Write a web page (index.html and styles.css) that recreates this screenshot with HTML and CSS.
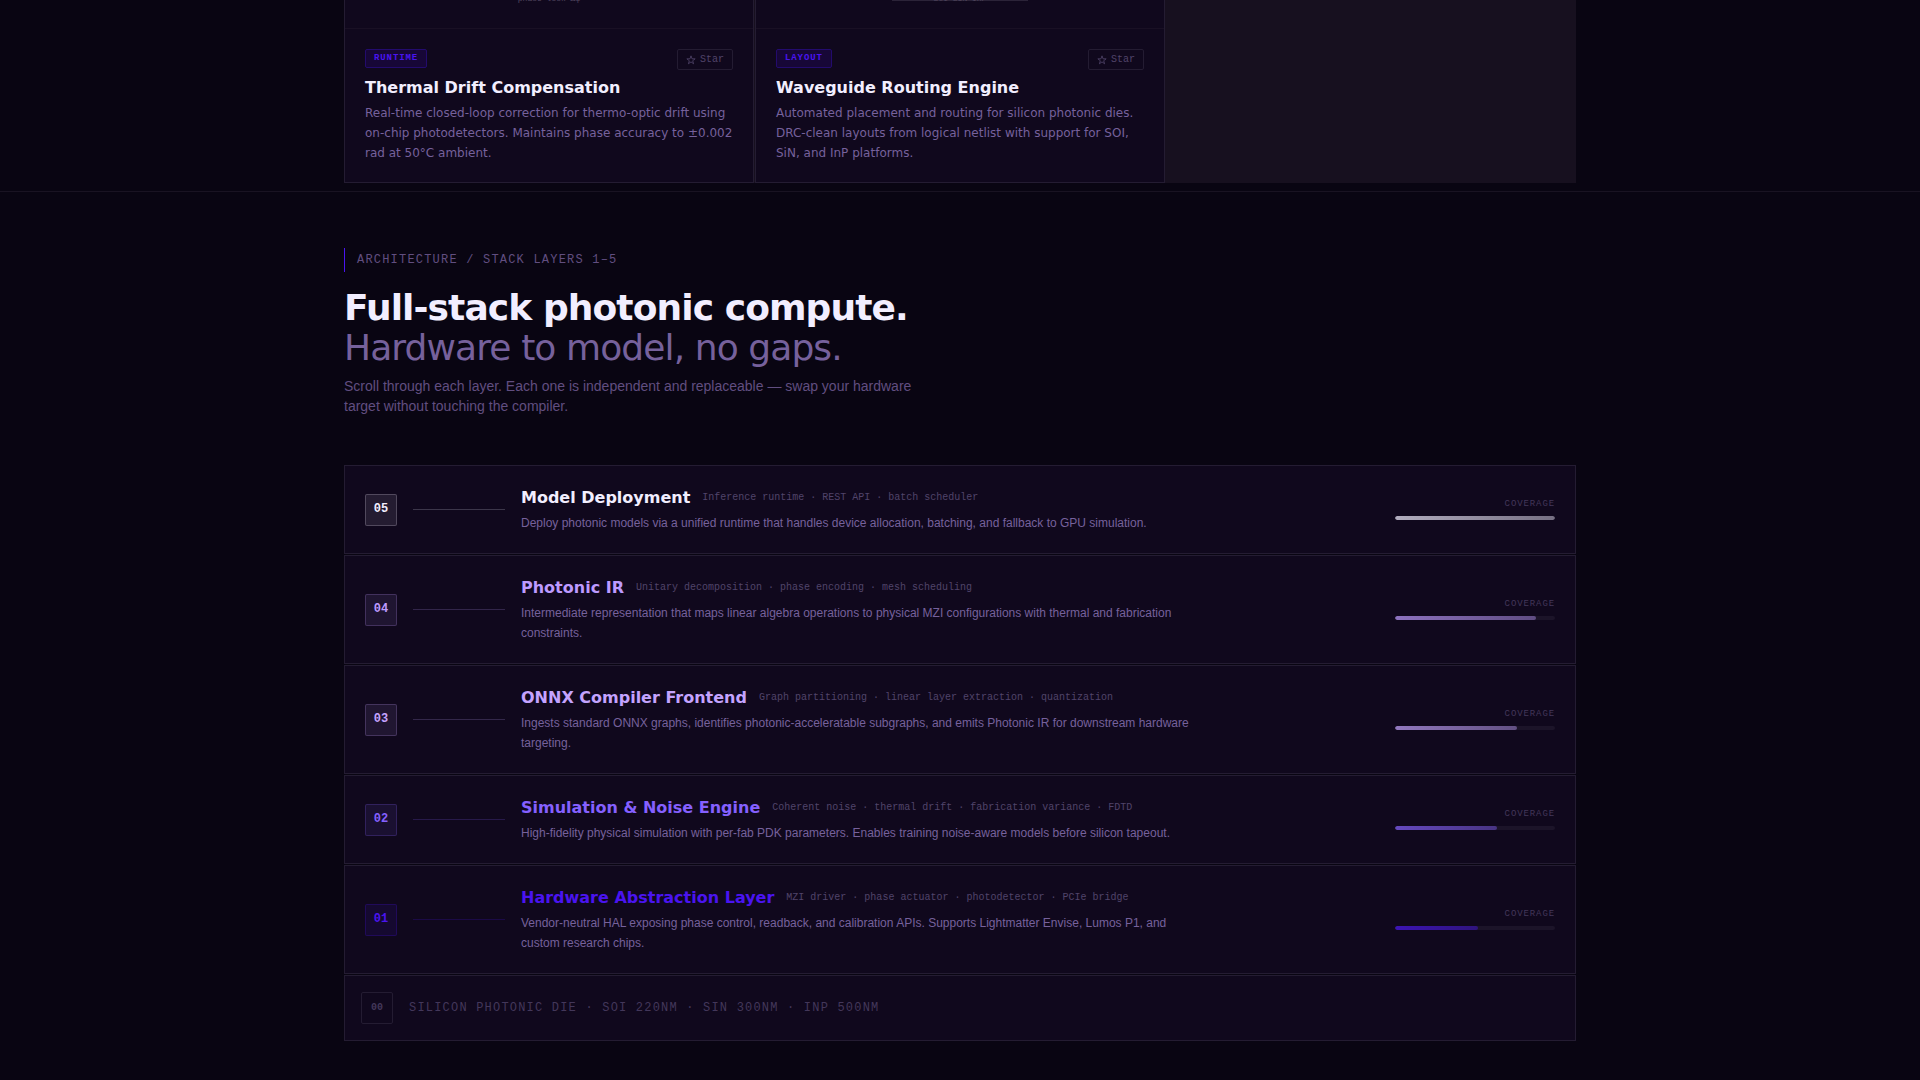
FILE: index.html
```
<!DOCTYPE html>
<html lang="en">
<head>
<meta charset="utf-8">
<title>Photonic compute stack</title>
<link rel="stylesheet" href="styles.css">
</head>
<body>
<section class="projects">
  <div class="container">
    <div class="card-grid">
      <article class="card">
        <div class="card-visual"><svg class="plot" viewBox="0 0 408 28"><text x="204" y="1" text-anchor="middle">phase lock Δφ</text></svg></div>
        <div class="card-body">
          <div class="card-top"><span class="tag">RUNTIME</span>
            <button class="star" type="button"><svg viewBox="0 0 24 24"><path d="M12 2L14.500 9.200H22L16 13.800L18.200 21L12 16.600L5.800 21L8 13.800L2 9.200H9.500Z"/></svg>Star</button></div>
          <h3>Thermal Drift Compensation</h3>
          <p>Real-time closed-loop correction for thermo-optic drift using on-chip photodetectors. Maintains phase accuracy to ±0.002 rad at 50°C ambient.</p>
        </div>
      </article>
      <article class="card">
        <div class="card-visual"><svg class="plot" viewBox="0 0 408 28"><path d="M136 0.500H272"/><text x="204" y="1" text-anchor="middle">SOI SiN InP</text></svg></div>
        <div class="card-body">
          <div class="card-top"><span class="tag">LAYOUT</span>
            <button class="star" type="button"><svg viewBox="0 0 24 24"><path d="M12 2L14.500 9.200H22L16 13.800L18.200 21L12 16.600L5.800 21L8 13.800L2 9.200H9.500Z"/></svg>Star</button></div>
          <h3>Waveguide Routing Engine</h3>
          <p>Automated placement and routing for silicon photonic dies. DRC-clean layouts from logical netlist with support for SOI, SiN, and InP platforms.</p>
        </div>
      </article>
    </div>
  </div>
</section>
<section class="architecture">
  <div class="container">
    <p class="eyebrow">ARCHITECTURE / STACK LAYERS 1–5</p>
    <h2>Full-stack photonic compute.<br><span>Hardware to model, no gaps.</span></h2>
    <p class="lead">Scroll through each layer. Each one is independent and replaceable — swap your hardware target without touching the compiler.</p>
    <div class="stack">
      <article class="layer l5">
        <span class="num">05</span><span class="wire"></span>
        <div class="info"><div class="head"><h3>Model Deployment</h3><span class="sub">Inference runtime · REST API · batch scheduler</span></div>
        <p>Deploy photonic models via a unified runtime that handles device allocation, batching, and fallback to GPU simulation.</p></div>
        <div class="coverage"><span>COVERAGE</span><div class="track"><div class="fill" style="width:100%"></div></div></div>
      </article>
      <article class="layer l4">
        <span class="num">04</span><span class="wire"></span>
        <div class="info"><div class="head"><h3>Photonic IR</h3><span class="sub">Unitary decomposition · phase encoding · mesh scheduling</span></div>
        <p>Intermediate representation that maps linear algebra operations to physical MZI configurations with thermal and fabrication constraints.</p></div>
        <div class="coverage"><span>COVERAGE</span><div class="track"><div class="fill" style="width:88%"></div></div></div>
      </article>
      <article class="layer l3">
        <span class="num">03</span><span class="wire"></span>
        <div class="info"><div class="head"><h3>ONNX Compiler Frontend</h3><span class="sub">Graph partitioning · linear layer extraction · quantization</span></div>
        <p>Ingests standard ONNX graphs, identifies photonic-acceleratable subgraphs, and emits Photonic IR for downstream hardware targeting.</p></div>
        <div class="coverage"><span>COVERAGE</span><div class="track"><div class="fill" style="width:76%"></div></div></div>
      </article>
      <article class="layer l2">
        <span class="num">02</span><span class="wire"></span>
        <div class="info"><div class="head"><h3>Simulation &amp; Noise Engine</h3><span class="sub">Coherent noise · thermal drift · fabrication variance · FDTD</span></div>
        <p>High-fidelity physical simulation with per-fab PDK parameters. Enables training noise-aware models before silicon tapeout.</p></div>
        <div class="coverage"><span>COVERAGE</span><div class="track"><div class="fill" style="width:64%"></div></div></div>
      </article>
      <article class="layer l1">
        <span class="num">01</span><span class="wire"></span>
        <div class="info"><div class="head"><h3>Hardware Abstraction Layer</h3><span class="sub">MZI driver · phase actuator · photodetector · PCIe bridge</span></div>
        <p>Vendor-neutral HAL exposing phase control, readback, and calibration APIs. Supports Lightmatter Envise, Lumos P1, and custom research chips.</p></div>
        <div class="coverage"><span>COVERAGE</span><div class="track"><div class="fill" style="width:52%"></div></div></div>
      </article>
      <div class="substrate"><span class="num">00</span><span>SILICON PHOTONIC DIE · SOI 220NM · SIN 300NM · INP 500NM</span></div>
    </div>
  </div>
</section>
</body>
</html>
```
FILE: styles.css
```
:root {
  --bg: #090512;
  --panel: #10081d;
  --line: #241c32;
  --muted: #76619c;
  --dim: #50446a;
  --faint: #43375a;
  --mono: "Liberation Mono", monospace;
  --display: "DejaVu Sans", sans-serif;
}
* { box-sizing: border-box; }
body { margin: 0; background: var(--bg); color: var(--muted); font: 12px/20px "Liberation Sans", sans-serif; }
h2, h3, p { margin: 0; }
.container { max-width: 1280px; margin: 0 auto; padding: 0 24px; }

.projects { padding-bottom: 8px; border-bottom: 1px solid #191322; }
.card-grid { display: grid; grid-template-columns: repeat(3, 1fr); gap: 1px; background: #17101f; }
.card { background: var(--panel); border: 1px solid var(--line); border-top: 0; font-family: var(--display); }
.card-visual { height: 29px; overflow: hidden; border-bottom: 1px solid #191024; }
.plot { display: block; width: 100%; height: 28px; }
.plot text { font: 8px var(--mono); fill: #51465f; }
.plot path { stroke: #2b2338; }
.card-body { padding: 20px 20px 19px; }
.card-top { display: flex; justify-content: space-between; align-items: flex-start; }
.tag { padding: 0 8px; border: 1px solid #230b6d; border-radius: 2px; background: #170737; color: #4a14f0; font: bold 9px/17px var(--mono); letter-spacing: 0.1em; }
.star { display: flex; align-items: center; gap: 4px; height: 21px; padding: 0 8px; border: 1px solid var(--line); border-radius: 2px; background: none; color: var(--dim); font: 10px/19px var(--mono); }
.star svg { width: 10px; height: 10px; fill: none; stroke: currentColor; stroke-width: 2; }
.card h3 { margin: 7px 0 4px; color: #f2eeff; font: bold 16px/22px var(--display); }

.architecture { padding: 56px 0 40px; }
.eyebrow { padding-left: 12px; border-left: 1px solid #4a14f0; color: #614e80; font: 12px/24px var(--mono); letter-spacing: 0.1em; }
h2 { margin: 16px 0 8px; color: #f2eeff; font: bold 36px/40px var(--display); letter-spacing: -0.025em; }
h2 span { color: var(--muted); font-weight: normal; }
.lead { max-width: 580px; color: #614e80; font-size: 14px; }

.stack { display: grid; gap: 1px; margin-top: 49px; background: var(--bg); }
.layer { display: grid; grid-template-columns: 32px 92px 1fr 160px; column-gap: 16px; align-items: center; padding: 20px; border: 1px solid var(--line); background: var(--panel); --c: #f2eeff; }
.num { display: block; width: 32px; height: 32px; border: 1px solid; border-radius: 2px; color: var(--c); border-color: color-mix(in srgb, var(--c) 22%, transparent); background: color-mix(in srgb, var(--c) 9%, transparent); font: bold 12px/29px var(--mono); text-align: center; }
.wire { height: 1px; background: color-mix(in srgb, var(--c) 20%, transparent); }
.info { min-width: 0; }
.head { display: flex; align-items: center; gap: 12px; }
.head h3 { color: var(--c); font: bold 16px/24px var(--display); }
.sub { color: var(--dim); font: 10px/24px var(--mono); }
.info p { max-width: 680px; margin-top: 3px; }
.coverage { padding-bottom: 3px; text-align: right; color: var(--faint); font: 9px/16px var(--mono); letter-spacing: 0.1em; }
.track { height: 4px; margin-top: 4px; border-radius: 2px; overflow: hidden; background: #1c1429; }
.fill { height: 100%; border-radius: 2px; background: linear-gradient(90deg, var(--c), color-mix(in srgb, var(--c) 60%, transparent)); opacity: .7; }
.l4 { --c: #bd9aff; }
.l3 { --c: #c4a3ff; }
.l2 { --c: #8560ff; }
.l1 { --c: #4a14f0; }
.substrate { display: flex; align-items: center; gap: 16px; padding: 16px; border: 1px solid var(--line); background: var(--panel); color: var(--faint); font: 12px/20px var(--mono); letter-spacing: 0.1em; }
.substrate .num { color: var(--faint); border-color: var(--line); background: none; font-size: 10px; letter-spacing: 0; }
```
